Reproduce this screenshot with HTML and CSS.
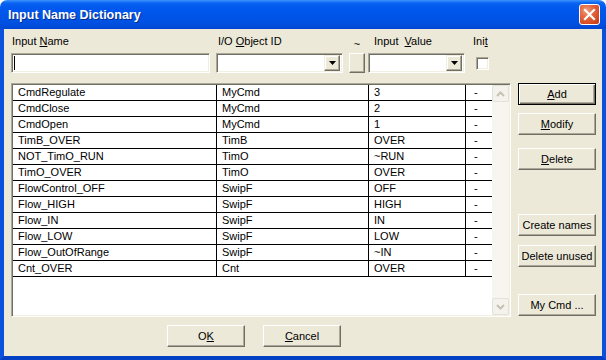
FILE: index.html
```
<!DOCTYPE html>
<html>
<head>
<meta charset="utf-8">
<link rel="stylesheet" href="styles.css">
</head>
<body>
<div class="window">
  <div class="titlebar">
    <span class="title">Input Name Dictionary</span>
    <div class="close">
      <svg width="13" height="13" viewBox="0 0 13 13"><path d="M2 2 L11 11 M11 2 L2 11" stroke="#fff" stroke-width="2.2" stroke-linecap="square"/></svg>
    </div>
  </div>
  <div class="body">
    <div class="fields">
      <div class="field f-name">
        <div class="label">Input <u>N</u>ame</div>
        <div class="edit sunken"><span class="caret"></span></div>
      </div>
      <div class="field f-obj">
        <div class="label">I/O <u>O</u>bject ID</div>
        <div class="combo sunken">
          <span class="drop"><svg width="7" height="4" viewBox="0 0 7 4"><path d="M0 0 H7 L3.5 4 Z" fill="#000"/></svg></span>
        </div>
      </div>
      <div class="field f-tilde">
        <div class="label">~</div>
        <div class="smallbtn"></div>
      </div>
      <div class="field f-val">
        <div class="label">Input&nbsp; <u>V</u>alue</div>
        <div class="combo sunken">
          <span class="drop"><svg width="7" height="4" viewBox="0 0 7 4"><path d="M0 0 H7 L3.5 4 Z" fill="#000"/></svg></span>
        </div>
      </div>
      <div class="field f-init">
        <div class="label">Ini<u>t</u></div>
        <div class="check sunken"></div>
      </div>
    </div>

    <div class="main">
      <div class="list sunken">
        <div class="grid">
          <div class="c">CmdRegulate</div><div class="c">MyCmd</div><div class="c">3</div><div class="c d">-</div>
          <div class="c">CmdClose</div><div class="c">MyCmd</div><div class="c">2</div><div class="c d">-</div>
          <div class="c">CmdOpen</div><div class="c">MyCmd</div><div class="c">1</div><div class="c d">-</div>
          <div class="c">TimB_OVER</div><div class="c">TimB</div><div class="c">OVER</div><div class="c d">-</div>
          <div class="c">NOT_TimO_RUN</div><div class="c">TimO</div><div class="c">~RUN</div><div class="c d">-</div>
          <div class="c">TimO_OVER</div><div class="c">TimO</div><div class="c">OVER</div><div class="c d">-</div>
          <div class="c">FlowControl_OFF</div><div class="c">SwipF</div><div class="c">OFF</div><div class="c d">-</div>
          <div class="c">Flow_HIGH</div><div class="c">SwipF</div><div class="c">HIGH</div><div class="c d">-</div>
          <div class="c">Flow_IN</div><div class="c">SwipF</div><div class="c">IN</div><div class="c d">-</div>
          <div class="c">Flow_LOW</div><div class="c">SwipF</div><div class="c">LOW</div><div class="c d">-</div>
          <div class="c">Flow_OutOfRange</div><div class="c">SwipF</div><div class="c">~IN</div><div class="c d">-</div>
          <div class="c">Cnt_OVER</div><div class="c">Cnt</div><div class="c">OVER</div><div class="c d">-</div>
        </div>
        <div class="scroll">
          <div class="arrow"><svg width="9" height="6" viewBox="0 0 9 6"><path d="M1 5 L4.5 1.5 L8 5" fill="none" stroke="#c5c2b2" stroke-width="2"/></svg></div>
          <div class="track"></div>
          <div class="arrow"><svg width="9" height="6" viewBox="0 0 9 6"><path d="M1 1 L4.5 4.5 L8 1" fill="none" stroke="#c5c2b2" stroke-width="2"/></svg></div>
        </div>
      </div>
      <div class="side">
        <div class="btn default b-add"><u>A</u>dd</div>
        <div class="btn b-mod"><u>M</u>odify</div>
        <div class="btn b-del"><u>D</u>elete</div>
        <div class="btn b-create">Create names</div>
        <div class="btn b-unused">Delete unused</div>
        <div class="btn b-my">My Cmd ...</div>
      </div>
    </div>

    <div class="footer">
      <div class="btn b-ok">O<u>K</u></div>
      <div class="btn b-cancel"><u>C</u>ancel</div>
    </div>
  </div>
</div>
</body>
</html>
```
FILE: styles.css
```
* { box-sizing: border-box; }
html, body { margin: 0; padding: 0; background: #fff; }
body {
  font-family: "Liberation Sans", Arial, sans-serif;
  font-size: 11px;
  color: #000;
}
u { text-decoration: underline; text-underline-offset: 1px; }

.window {
  width: 606px;
  height: 360px;
  display: flex;
  flex-direction: column;
}

.titlebar {
  height: 29px;
  flex: none;
  display: flex;
  align-items: center;
  padding-left: 8px;
  border-radius: 7px 7px 0 0;
  background: linear-gradient(to bottom, #3d95ff 0px, #0a63f0 3px, #0058ee 8px, #0054e6 18px, #0050e0 24px, #0046d2 29px);
}
.title {
  color: #fff;
  font-weight: bold;
  font-size: 12.5px;
  text-shadow: 1px 1px 0 #0a2a8a;
  margin-top: 1px;
}
.close {
  margin-left: auto;
  margin-right: 6px;
  width: 21px;
  height: 21px;
  border: 1px solid #fff;
  border-radius: 3px;
  background: radial-gradient(circle at 35% 30%, #f0a080 0%, #e46a44 35%, #d2441c 80%, #c0391a 100%);
  display: flex;
  align-items: center;
  justify-content: center;
}

.body {
  flex: 1;
  background: #ece9d8;
  border-left: 4px solid #0a52dc;
  border-right: 4px solid #0a52dc;
  border-bottom: 4px solid #0340c4;
  padding: 6px 0 0 7px;
  display: flex;
  flex-direction: column;
}

.sunken {
  border: 1px solid;
  border-color: #aca899 #ffffff #ffffff #aca899;
  box-shadow: inset 1px 1px 0 #716f64, inset -1px -1px 0 #f1efe2;
  background: #fff;
}

.fields { display: flex; align-items: flex-start; }
.field { display: flex; flex-direction: column; }
.label { height: 13px; line-height: 13px; margin-bottom: 5px; white-space: nowrap; }

.f-name { width: 199px; }
.f-name .label { padding-left: 1px; }
.f-obj { width: 127px; margin-left: 6px; }
.f-obj .label { padding-left: 2px; }
.f-tilde { width: 16px; margin-left: 6px; }
.f-tilde .label { text-align: center; padding-top: 3px; }
.f-val { width: 97px; margin-left: 3px; }
.f-val .label { padding-left: 6px; }
.f-init { width: 13px; margin-left: 11px; }
.f-init .label { margin-left: -3px; }

.edit { height: 20px; display: flex; align-items: center; padding-left: 2px; }
.caret { display: block; width: 1px; height: 14px; background: #000; }

.combo { height: 20px; display: flex; justify-content: flex-end; align-items: center; padding-right: 2px; }
.drop {
  width: 16px;
  height: 16px;
  background: #ece9d8;
  border: 1px solid;
  border-color: #f1efe2 #716f64 #716f64 #f1efe2;
  box-shadow: inset -1px -1px 0 #aca899, inset 1px 1px 0 #fff;
  display: flex;
  align-items: center;
  justify-content: center;
}

.smallbtn {
  height: 20px;
  background: #ece9d8;
  border: 1px solid;
  border-color: #fff #716f64 #716f64 #fff;
  box-shadow: inset -1px -1px 0 #aca899;
}

.check { width: 13px; height: 13px; margin-top: 4px; }

.main { display: flex; margin-top: 10px; align-items: flex-start; }

.list {
  width: 500px;
  height: 234px;
  padding: 1px;
  display: flex;
  align-items: stretch;
}
.grid {
  width: 479px;
  display: grid;
  grid-template-columns: 204px 152px 97px 26px;
  grid-auto-rows: 16px;
  align-content: start;
}
.c {
  border-bottom: 1px solid #000;
  border-right: 1px solid #000;
  padding-left: 5px;
  line-height: 15px;
  white-space: nowrap;
  overflow: hidden;
}
.c.d { border-right: none; padding-left: 8px; }

.scroll {
  width: 17px;
  display: flex;
  flex-direction: column;
  background: #f6f5f0;
}
.track { flex: 1; }
.arrow {
  height: 17px;
  border: 1px solid #e4e2d8;
  border-radius: 2px;
  background: #f3f2ed;
  display: flex;
  align-items: center;
  justify-content: center;
}

.side { width: 78px; margin-left: 7px; display: flex; flex-direction: column; }

.btn {
  height: 22px;
  background: #ece9d8;
  border: 1px solid;
  border-color: #fff #716f64 #716f64 #fff;
  box-shadow: inset -1px -1px 0 #aca899;
  display: flex;
  align-items: center;
  justify-content: center;
  white-space: nowrap;
  line-height: 13px;
}
.btn.default {
  border: 1px solid #000;
  box-shadow: inset 1px 1px 0 #fff, inset -1px -1px 0 #716f64, inset -2px -2px 0 #aca899;
}
.b-mod { margin-top: 8px; }
.b-del { margin-top: 13px; }
.b-create { margin-top: 44px; }
.b-unused { margin-top: 9px; }
.b-my { margin-top: 27px; }

.footer { display: flex; margin-top: 8px; }
.b-ok { width: 78px; margin-left: 156px; }
.b-cancel { width: 78px; margin-left: 18px; }
```
